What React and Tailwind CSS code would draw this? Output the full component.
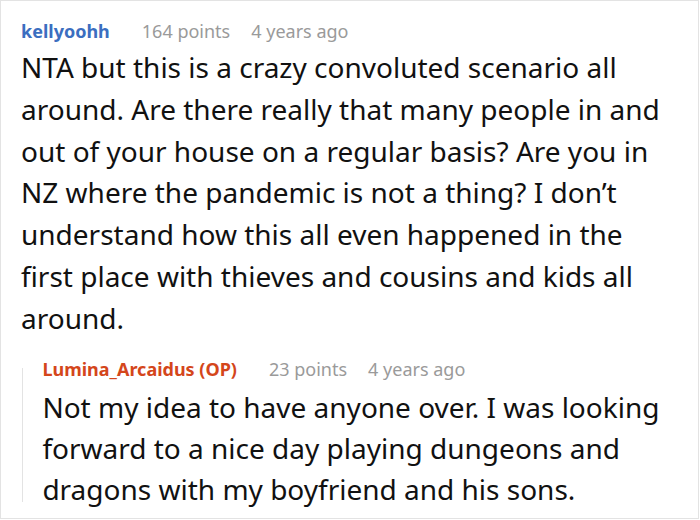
import React from "react";

const comment = {
  user: "kellyoohh",
  points: "164 points",
  age: "4 years ago",
  text: "NTA but this is a crazy convoluted scenario all around. Are there really that many people in and out of your house on a regular basis? Are you in NZ where the pandemic is not a thing? I don’t understand how this all even happened in the first place with thieves and cousins and kids all around.",
  reply: {
    user: "Lumina_Arcaidus (OP)",
    points: "23 points",
    age: "4 years ago",
    text: "Not my idea to have anyone over. I was looking forward to a nice day playing dungeons and dragons with my boyfriend and his sons.",
  },
};

function Meta({ user, points, age, color }) {
  return (
    <div className="flex items-center text-[18px] leading-6">
      <span className={`font-bold ${color}`}>{user}</span>
      <span className="ml-[32px] text-[#9a9a9a]">{points}</span>
      <span className="ml-[21px] text-[#9a9a9a]">{age}</span>
    </div>
  );
}

export default function App() {
  return (
    <div
      className="w-[699px] h-[519px] bg-white border border-[#e3e3e3] overflow-hidden"
      style={{ fontFamily: '"Noto Sans", "Open Sans", sans-serif' }}
    >
      <div className="pl-5 pr-[4px] pt-[18px]">
        <Meta user={comment.user} points={comment.points} age={comment.age} color="text-[#3b6ec0]" />
        <p className="mt-[4px] pr-[24px] text-[28px] leading-[41.8px] text-[#111]">{comment.text}</p>

        <div className="mt-[17px] ml-[1px] flex">
          <div className="w-px bg-[#e3e3e3] mt-[11px] mb-[8px]" />
          <div className="pl-5">
            <Meta user={comment.reply.user} points={comment.reply.points} age={comment.reply.age} color="text-[#d4461b]" />
            <p className="mt-[6px] text-[28px] leading-[41px] text-[#111]">{comment.reply.text}</p>
          </div>
        </div>
      </div>
    </div>
  );
}
